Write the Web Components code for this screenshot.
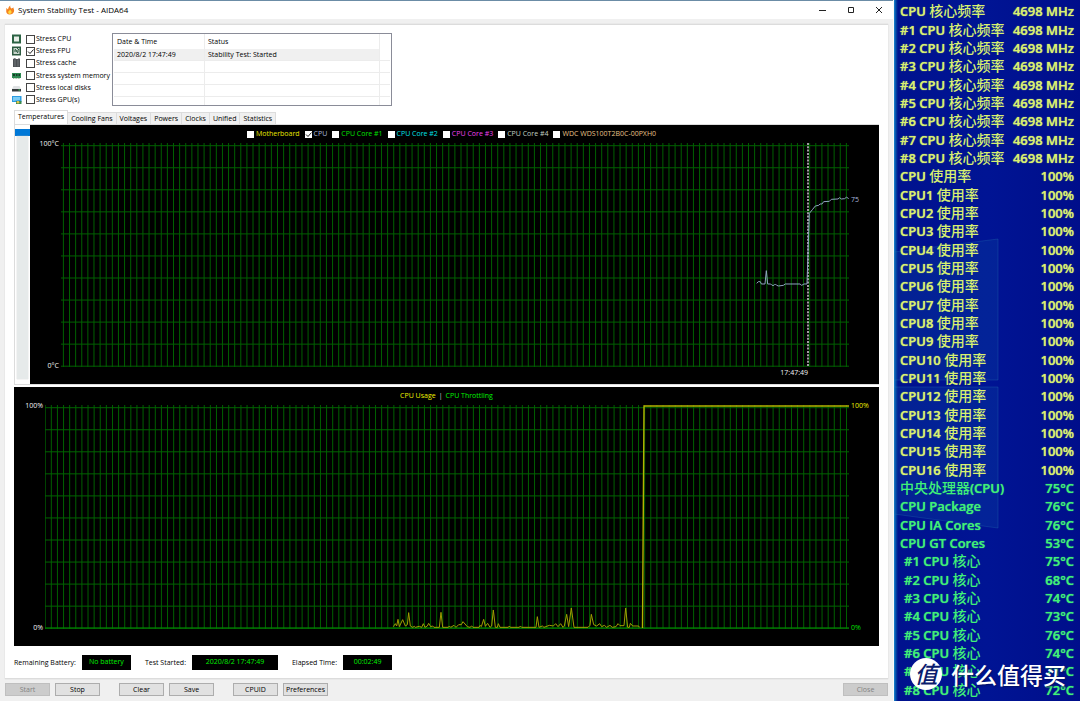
<!DOCTYPE html>
<html lang="en">
<head>
<meta charset="utf-8">
<title>System Stability Test - AIDA64</title>
<style>
  body { margin: 0; font-family: "Open Sans", "Noto Sans CJK SC", sans-serif; font-size: 7px; line-height: 10px; color: #000; }
</style>
</head>
<body>
<stability-desktop></stability-desktop>

<template id="t-desktop">
  <style>
    :host { display: flex; min-height: 100vh; background: #f0f0f0; }
    main { flex: 1; min-width: 0; display: flex; flex-direction: column; box-sizing: border-box; border-right: 1px solid #fafafa; }
    .panel { flex: 1; display: flex; flex-direction: column; margin: 5px 5px 4px; padding: 8px 9px 8px 9px; background: #fff; border: 1px solid #dcdcdc; border-width: 1px 0; box-shadow: 0 0 1px #c8c8c8; }
    .top { display: flex; height: 73px; margin-left: -2px; gap: 3px; }
    .stress { display: grid; grid-auto-rows: 1fr; width: 97px; }
    .page { flex: 1 1 261px; display: flex; box-sizing: border-box; border: 1px solid #dcdcdc; border-width: 1px 0 1px 1px; }
    .strip { width: 15px; display: flex; flex-direction: column; padding: 4px 0 5px; box-sizing: border-box; }
    .strip i { height: 7px; background: #0078d7; }
    .strip b { flex: 1; margin: 0 2px; background: #e6eaea; box-shadow: 0 0 1px #bbb; }
    .page line-chart { flex: 1; }
    .usage { flex: 1 1 259px; margin-top: 2px; }
    .status { display: flex; gap: 14px; margin-top: 9px; height: 15px; }
    footer { display: flex; gap: 5px; padding: 0 5px 5px; }
    footer .gap { margin-left: 14px; }
    footer .end { margin-left: auto; }
    .sep { color: #ddd; }
  </style>
  <main>
    <title-bar>System Stability Test - AIDA64</title-bar>
    <section class="panel">
      <div class="top">
        <div class="stress">
          <stress-option icon="cpu">Stress CPU</stress-option>
          <stress-option icon="fpu" checked>Stress FPU</stress-option>
          <stress-option icon="cache">Stress cache</stress-option>
          <stress-option icon="memory">Stress system memory</stress-option>
          <stress-option icon="disk">Stress local disks</stress-option>
          <stress-option icon="gpu">Stress GPU(s)</stress-option>
        </div>
        <event-log></event-log>
      </div>
      <tab-strip></tab-strip>
      <div class="page">
        <div class="strip"><i></i><b></b></div>
        <line-chart kind="temp" top="100°C" bottom="0°C">
          <legend-item color="#e6e600">Motherboard</legend-item>
          <legend-item color="#a9b8dc" checked>CPU</legend-item>
          <legend-item color="#00e000">CPU Core #1</legend-item>
          <legend-item color="#00e0e8">CPU Core #2</legend-item>
          <legend-item color="#f040f0">CPU Core #3</legend-item>
          <legend-item color="#c0d0c0">CPU Core #4</legend-item>
          <legend-item color="#e8c088">WDC WDS100T2B0C-00PXH0</legend-item>
        </line-chart>
      </div>
      <line-chart class="usage" kind="usage" top="100%" bottom="0%">
        <span style="color:#f0f000">CPU Usage</span><span class="sep">|</span><span style="color:#00f000">CPU Throttling</span>
      </line-chart>
      <div class="status">
        <status-field label="Remaining Battery:" size="49">No battery</status-field>
        <status-field label="Test Started:" size="86">2020/8/2 17:47:49</status-field>
        <status-field label="Elapsed Time:" size="49">00:02:49</status-field>
      </div>
    </section>
    <footer>
      <push-button disabled>Start</push-button>
      <push-button>Stop</push-button>
      <push-button class="gap">Clear</push-button>
      <push-button>Save</push-button>
      <push-button class="gap">CPUID</push-button>
      <push-button>Preferences</push-button>
      <push-button class="end" disabled>Close</push-button>
    </footer>
  </main>
  <sensor-panel></sensor-panel>
</template>

<template id="t-title">
  <style>
    :host { display: flex; align-items: center; height: 18px; background: #fff; border-top: 1px solid #6b8ca6; padding-left: 5px; }
    h1 { flex: 1; margin: 0 0 0 3px; font-size: 8px; font-weight: 400; line-height: 10px; color: #000; }
    button { width: 28px; height: 18px; padding: 0; border: 0; background: none; display: grid; place-items: center; }
    svg { display: block; }
  </style>
  <svg width="10" height="10" viewBox="0 0 10 10"><path d="M1 3c1 .3 1.600 1 2 1.600C3.200 3 4 1.500 5.300.5 5 2 5.600 2.500 6.200 3.600 7 3.400 8 3 8.600 2.600 8.200 4 9.600 4.500 9 6.500 8.500 8.600 6.600 9.600 4.600 9.500 2.500 9.300 1 8 1.200 6 1.300 5 1.500 4 1 3z" fill="#f58220"/><path d="M3.200 6.500c.8 0 1-1 1.800-2 .6 1.400 1.800 1.200 1.600 2.800C6.400 8.600 5.500 9 4.600 9 3.500 8.800 3 7.600 3.200 6.500z" fill="#ffd83a"/></svg>
  <h1><slot></slot></h1>
  <button aria-label="Minimize"><svg width="8" height="8"><path d="M0 4.500h7" stroke="#222"/></svg></button>
  <button aria-label="Maximize"><svg width="8" height="8"><path d="M1.500 1.500h5v5h-5z" fill="none" stroke="#222"/></svg></button>
  <button aria-label="Close"><svg width="8" height="8"><path d="M1 1l6 6M7 1l-6 6" stroke="#222"/></svg></button>
</template>

<template id="t-stress">
  <style>
    :host { display: flex; align-items: center; }
    svg { width: 10px; height: 10px; flex: none; margin-right: 4px; }
    label { display: flex; align-items: center; gap: 1px; white-space: nowrap; }
    input { appearance: none; width: 9px; height: 9px; margin: 0; border: 1px solid #444; background: #fff; }
    input:checked { background: url("data:image/svg+xml,%3Csvg xmlns='http://www.w3.org/2000/svg' viewBox='0 0 7 7'%3E%3Cpath d='M1 3.500l2 2 3.500-4' fill='none' stroke='%23222'/%3E%3C/svg%3E"); }
  </style>
  <svg viewBox="0 0 10 10" aria-hidden="true"></svg>
  <label><input type="checkbox"><slot></slot></label>
</template>

<template id="t-log">
  <style>
    :host { display: block; width: 280px; box-sizing: border-box; border: 1px solid #8a8c98; background: #fff; padding: 0 1px; overflow: hidden; }
    table { width: 100%; border-collapse: separate; border-spacing: 0; table-layout: fixed; }
    th, td { padding: 0 0 0 3px; height: 11px; line-height: 11px; font-weight: 400; text-align: left; border-right: 1px solid #ececec; border-bottom: 1px solid #ececec; white-space: nowrap; }
    th { height: 15px; line-height: 15px; border-bottom: 0; }
    th:last-child, td:last-child { border-right: 0; }
    .on td { background: #f0f0f0; height: 10px; line-height: 10px; padding-top: 1px; }
    .on td:last-child { background: #fff; }
    .c1 { width: 91px; } .c3 { width: 10px; }
    tr:last-child td { border-bottom: 0; }
  </style>
  <table>
    <colgroup><col class="c1"><col><col class="c3"></colgroup>
    <thead><tr><th>Date &amp; Time</th><th>Status</th><th></th></tr></thead>
    <tbody>
      <tr class="on"><td>2020/8/2 17:47:49</td><td>Stability Test: Started</td><td></td></tr>
      <tr><td></td><td></td><td></td></tr>
      <tr><td></td><td></td><td></td></tr>
      <tr><td></td><td></td><td></td></tr>
      <tr><td></td><td></td><td></td></tr>
    </tbody>
  </table>
</template>

<template id="t-tabs">
  <style>
    :host { display: flex; align-items: flex-end; height: 14px; margin-top: 4px; }
    button { font: inherit; color: #000; height: 12px; line-height: 10px; padding: 0 3px; border: 1px solid #dcdcdc; border-width: 1px 1px 0 0; background: #f0f0f0; white-space: nowrap; }
    button[aria-selected=true] { height: 14px; padding: 0 3px 2px; border-left-width: 1px; background: #fff; }
  </style>
  <button role="tab" aria-selected="true">Temperatures</button><button role="tab">Cooling Fans</button><button role="tab">Voltages</button><button role="tab">Powers</button><button role="tab">Clocks</button><button role="tab">Unified</button><button role="tab">Statistics</button>
</template>

<template id="t-legend">
  <style>
    :host { display: block; }
    label { display: flex; align-items: center; gap: 2px; white-space: nowrap; }
    input { appearance: none; width: 7px; height: 7px; margin: 0; background: #fff; }
    input:checked { background: #fff url("data:image/svg+xml,%3Csvg xmlns='http://www.w3.org/2000/svg' viewBox='0 0 7 7'%3E%3Cpath d='M1 3.500l2 2 3.500-4' fill='none' stroke='%23222'/%3E%3C/svg%3E"); }
  </style>
  <label><input type="checkbox"><slot></slot></label>
</template>

<template id="t-chart">
  <style>
    :host { display: grid; grid-template: 18px minmax(100px, 1fr) 17px / 31px minmax(0, 1fr) 30px; background: #000; color: #f4f4f4; }
    .legend { grid-column: 1 / -1; display: flex; justify-content: center; align-items: center; gap: 5px; padding-right: 6px; }
    .legend.text { gap: 3px; padding: 0; }
    .axis { display: flex; flex-direction: column; justify-content: space-between; margin: -4px 2px -4px 0; text-align: right; }
    .plot { position: relative; }
    .plot svg { position: absolute; inset: 0; width: 100%; height: 100%; }
    .right { position: relative; margin: -4px 0 -4px 2px; display: flex; flex-direction: column; justify-content: space-between; }
    .mark { position: absolute; top: 24%; left: 0; color: #a9b8dc; }
    .time { grid-column: 2; text-align: right; padding-right: 5.2%; line-height: 12px; }
    .y { color: #f0f000; } .g { color: #00e000; }
  </style>
  <div class="legend"><slot></slot></div>
  <div class="axis"><span class="hi"></span><span class="lo"></span></div>
  <div class="plot"></div>
  <div class="right"></div>
  <div class="time"></div>
</template>

<template id="t-status">
  <style>
    :host { display: flex; align-items: center; gap: 6px; white-space: nowrap; }
    output { height: 15px; line-height: 14px; background: #000; color: #00f000; text-align: center; }
  </style>
  <span></span><output><slot></slot></output>
</template>

<template id="t-button">
  <style>
    :host { display: block; }
    button { font: inherit; display: block; width: 45px; height: 13px; line-height: 11px; padding: 0; border: 1px solid #adadad; background: #e1e1e1; color: #000; white-space: nowrap; }
    button:disabled { background: #ccc; border-color: #bfbfbf; color: #838383; }
  </style>
  <button type="button"><slot></slot></button>
</template>

<template id="t-sensors">
  <style>
    :host { position: relative; display: flex; flex-direction: column; width: 186px; background: linear-gradient(90deg, #1c8ad0 0, #0446a4 2px, #00128e 4px, #001494 50%, #000e8a 100%); overflow: hidden; }
    .glass { position: absolute; left: 0; top: 0; width: 100%; height: 100%; }
    .rows { position: relative; flex: 1; display: grid; grid-auto-rows: 1fr; padding: 2px 6px; }
    .brand { position: absolute; left: 16px; bottom: 10px; display: flex; align-items: center; gap: 9px; color: #fff; font-family: "Noto Sans CJK SC", sans-serif; font-size: 23px; line-height: 34px; font-weight: 500; white-space: nowrap; text-shadow: 1px 1px 2px #001060; }
    .brand b { width: 32px; height: 32px; line-height: 30px; border-radius: 50%; background: #fff; color: #0b1c6e; text-align: center; font-size: 23px; font-style: italic; font-weight: 500; text-shadow: none; }
  </style>
  <svg class="glass" viewBox="0 0 186 701" preserveAspectRatio="none" aria-hidden="true">
    <g fill="#1060a8" fill-opacity=".2" stroke="#3088b8" stroke-opacity=".25"><path d="M0 252L104 239V380H0z"/><path d="M0 387H104V528L0 514z"/></g>
  </svg>
  <div class="rows"></div>
  <div class="brand"><b>值</b><span>什么值得买</span></div>
</template>

<template id="t-sensor">
  <style>
    :host { display: flex; justify-content: space-between; align-items: center; font-size: 13px; line-height: 16px; font-weight: 600; color: #d8f070; white-space: nowrap; text-shadow: 0 0 1px currentColor; }
    :host([tone=green]) { color: #40f078; }
    :host([indent]) { padding-left: 4px; }
    i { font: 500 14px/14px "Noto Sans CJK SC", sans-serif; text-shadow: none; }
  </style>
  <span class="name"></span><span class="value"></span>
</template>

<script>
  class Base extends HTMLElement {
    stamp(id) {
      const root = this.attachShadow({ mode: 'open' });
      root.append(document.getElementById(id).content.cloneNode(true));
      return root;
    }
  }

  const ICONS = {
    cpu: '<path d="M0 .5h9v9H0z" fill="#2c6344"/><path d="M2 2.500h5v5H2z" fill="#e8eee8"/>',
    fpu: '<path d="M0 .5h9v9H0z" fill="#2c5a40"/><path d="M1.500 2h6v6h-6z" fill="#c8d4cc"/><path d="M2 5h5M3 3l3 4M5 2l2 2" stroke="#2c5a40"/>',
    cache: '<path d="M1 1l2-1 1 1h2l1-1 1 1v8H1z" fill="#4c5054"/><path d="M3 1.500v7M6 1.500v7" stroke="#85898c" stroke-width=".7"/>',
    memory: '<path d="M0 2h9v5H0z" fill="#2d8a52"/><path d="M1 3h2v2H1zM4 3h1.500v2H4zM6.500 3H8v2H6.500z" fill="#173c28"/><path d="M1 7.500h7" stroke="#9ab89a" stroke-dasharray="1 .6"/>',
    disk: '<path d="M1.500 3h6L9 6H0z" fill="#dfe2e4"/><path d="M0 6h9v2.500H0z" fill="#33383a"/><path d="M6.500 7h1.500" stroke="#3fd060"/>',
    gpu: '<path d="M0 1h9.500v6H0z" fill="#2b9be0"/><path d="M1 2h7v3L1 6z" fill="#7ccdf5"/><path d="M4 6h5.500v3H4z" fill="#3d8a50"/><circle cx="6" cy="7.300" r="1.300" fill="#e8c850"/>'
  };

  const CPU_TRACE = '170,490 175,485 181,485 184,492 195,492 199,452 203,492 212,492 216,496 222,496 226,492 230,496 236,498 250,496 256,492 300,492 305,496 312,492 321,492 328,280 338,268 346,258 356,256 360,252 366,252 371,245 388,244 394,238 414,237 419,233 424,237 434,236 440,231 446,237';
  const USAGE_TRACE = '40,140 46,131 50,138 54,118 58,140 68,119 76,138 82,134 86,98 91,138 98,142 103,139 106,142 118,139 125,142 130,131 135,142 142,138 146,130 152,140 158,138 162,142 178,142 183,97 188,142 205,142 208,138 212,142 222,136 228,142 236,134 244,134 249,125 262,140 270,142 275,138 279,142 297,142 300,136 304,140 311,118 316,139 323,130 330,142 335,138 340,90 346,142 352,142 355,131 360,142 385,142 388,138 391,142 418,142 421,138 425,142 468,142 472,110 477,142 487,138 492,142 508,136 520,138 527,131 534,140 542,131 549,142 553,138 560,103 566,140 574,84 582,142 624,142 630,136 634,103 641,134 650,138 659,131 665,140 673,136 680,142 690,136 697,142 708,140 714,131 720,137 732,137 737,84 743,142 748,142 751,130 758,138 776,138 778,142';

  function gridLines(width, first, count, color) {
    let v = '', h = '';
    for (let i = 0; i < count; i++) v += `M${(first + i * 6.117).toFixed(2)} 0V224`;
    for (let i = 0; i <= 10; i++) h += `M0 ${(2.7 + i * 22.05).toFixed(2)}H${width}`;
    return `<path d="${v}" stroke="#006000"/><path d="${h}" stroke="${color}"/>`;
  }

  customElements.define('stability-desktop', class extends Base {
    constructor() { super(); this.stamp('t-desktop'); }
  });
  customElements.define('title-bar', class extends Base {
    constructor() { super(); this.stamp('t-title'); }
  });
  customElements.define('event-log', class extends Base {
    constructor() { super(); this.stamp('t-log'); }
  });
  customElements.define('tab-strip', class extends Base {
    constructor() { super(); this.stamp('t-tabs'); }
  });
  customElements.define('stress-option', class extends Base {
    connectedCallback() {
      const root = this.stamp('t-stress');
      root.querySelector('svg').innerHTML = ICONS[this.getAttribute('icon')];
      root.querySelector('input').checked = this.hasAttribute('checked');
    }
  });
  customElements.define('legend-item', class extends Base {
    connectedCallback() {
      const root = this.stamp('t-legend');
      root.querySelector('label').style.color = this.getAttribute('color');
      root.querySelector('input').checked = this.hasAttribute('checked');
    }
  });
  customElements.define('status-field', class extends Base {
    connectedCallback() {
      const root = this.stamp('t-status');
      root.querySelector('span').textContent = this.getAttribute('label');
      root.querySelector('output').style.width = this.getAttribute('size') + 'px';
    }
  });
  customElements.define('push-button', class extends Base {
    connectedCallback() {
      this.stamp('t-button').querySelector('button').disabled = this.hasAttribute('disabled');
    }
  });
  customElements.define('line-chart', class extends Base {
    connectedCallback() {
      const root = this.stamp('t-chart');
      const $ = s => root.querySelector(s);
      $('.hi').textContent = this.getAttribute('top');
      $('.lo').textContent = this.getAttribute('bottom');
      if (this.getAttribute('kind') === 'temp') {
        $('.plot').innerHTML = `<svg viewBox="0 0 788 224" preserveAspectRatio="none" fill="none">${gridLines(788, 2.4, 129, '#006000')}
          <path d="M747 0V223" stroke="#c8c0c8" stroke-width="1.600" stroke-dasharray="2 1.300"/>
          <g transform="translate(639 -23) scale(.33333)"><polyline points="${CPU_TRACE}" stroke="#8ea6c0" stroke-width="3"/></g></svg>`;
        $('.right').innerHTML = '<span class="mark">75</span>';
        $('.time').textContent = '17:47:49';
      } else {
        $('.legend').classList.add('text');
        $('.plot').innerHTML = `<svg viewBox="0 0 804 224" preserveAspectRatio="none" fill="none">${gridLines(804, .2, 132, '#006400')}
          <path d="M0 223H804" stroke="#008800"/>
          <g transform="translate(335 175) scale(.33333)"><polyline points="${USAGE_TRACE}" stroke="#a0a000" stroke-width="3"/></g>
          <path d="M597.500 223L599 1H804" stroke="#b4b400" stroke-width="1.400"/></svg>`;
        $('.right').innerHTML = '<span class="y">100%</span><span class="g">0%</span>';
      }
    }
  });
  customElements.define('sensor-row', class extends Base {
    connectedCallback() {
      const root = this.stamp('t-sensor');
      root.querySelector('.name').innerHTML = this.getAttribute('name').replace(/[\u4e00-\u9fff]+/g, '<i>$&</i>');
      root.querySelector('.value').textContent = this.getAttribute('value');
    }
  });
  customElements.define('sensor-panel', class extends Base {
    connectedCallback() {
      const rows = this.stamp('t-sensors').querySelector('.rows');
      const add = (name, value, attrs = {}) => {
        const row = document.createElement('sensor-row');
        row.setAttribute('name', name);
        row.setAttribute('value', value);
        for (const key in attrs) row.setAttribute(key, attrs[key]);
        rows.append(row);
      };
      add('CPU 核心频率', '4698 MHz');
      for (let i = 1; i <= 8; i++) add(`#${i} CPU 核心频率`, '4698 MHz');
      add('CPU 使用率', '100%');
      for (let i = 1; i <= 16; i++) add(`CPU${i} 使用率`, '100%');
      const green = { tone: 'green' };
      add('中央处理器(CPU)', '75°C', green);
      add('CPU Package', '76°C', green);
      add('CPU IA Cores', '76°C', green);
      add('CPU GT Cores', '53°C', green);
      [75, 68, 74, 73, 76, 74, 71, 72].forEach((t, i) =>
        add(`#${i + 1} CPU 核心`, `${t}°C`, { tone: 'green', indent: '' }));
    }
  });
</script>
</body>
</html>
